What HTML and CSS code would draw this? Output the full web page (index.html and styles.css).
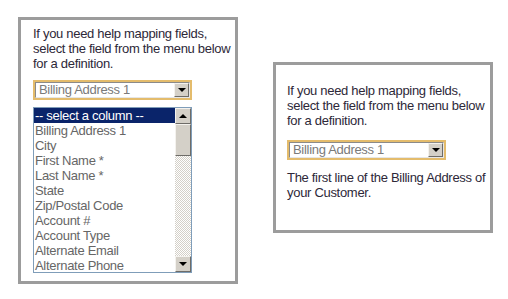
FILE: index.html
```html
<!DOCTYPE html>
<html>
<head>
<meta charset="utf-8">
<link rel="stylesheet" href="styles.css">
</head>
<body>
<div class="page">
  <div class="box box-left">
    <p class="help">If you need help mapping fields, select the field from the menu below for a definition.</p>
    <div class="combo">
      <div class="combo-inner">
        <span class="combo-text">Billing Address 1</span>
        <span class="btn"><span class="tri-down"></span></span>
      </div>
    </div>
    <div class="listbox">
      <ul class="options">
        <li class="selected">-- select a column --</li>
        <li>Billing Address 1</li>
        <li>City</li>
        <li>First Name *</li>
        <li>Last Name *</li>
        <li>State</li>
        <li>Zip/Postal Code</li>
        <li>Account #</li>
        <li>Account Type</li>
        <li>Alternate Email</li>
        <li>Alternate Phone</li>
      </ul>
      <div class="scrollbar">
        <span class="btn sbtn"><span class="tri-up"></span></span>
        <span class="thumb"></span>
        <span class="track"></span>
        <span class="btn sbtn"><span class="tri-down"></span></span>
      </div>
    </div>
  </div>
  <div class="box box-right">
    <p class="help">If you need help mapping fields, select the field from the menu below for a definition.</p>
    <div class="combo combo-spaced">
      <div class="combo-inner">
        <span class="combo-text">Billing Address 1</span>
        <span class="btn"><span class="tri-down"></span></span>
      </div>
    </div>
    <p class="definition">The first line of the Billing Address of your Customer.</p>
  </div>
</div>
</body>
</html>
```
FILE: styles.css
```css
* { box-sizing: border-box; }
html, body { margin: 0; padding: 0; background: #fff; }
body {
  font-family: "Liberation Sans", Arial, sans-serif;
  font-size: 13px;
  letter-spacing: -0.3px;
  color: #2d2838;
}
.page {
  display: flex;
  align-items: flex-start;
  gap: 35px;
  padding: 17px 0 0 18px;
}
.box {
  width: 220px;
  border: 3px solid #9c9c9c;
  background: #fff;
}
.box-left {
  height: 267px;
  padding: 6px 2px 0 12px;
}
.box-right {
  height: 171px;
  margin-top: 45px;
  padding: 18px 2px 0 11px;
}
.help {
  margin: 0;
  line-height: 15px;
}
.combo {
  margin-top: 9px;
  width: 159px;
  height: 20px;
  border: 2px solid #e4bc6c;
}
.combo-spaced { margin-top: 12px; }
.combo-inner {
  display: flex;
  height: 16px;
  border-top: 1px solid #8a8a8a;
  border-left: 1px solid #8a8a8a;
  border-bottom: 1px solid #e6e6e6;
  border-right: 1px solid #e6e6e6;
  background: #fff;
}
.combo-text {
  flex: 1;
  padding-left: 3px;
  line-height: 14px;
  font-size: 13px;
  color: #7a7a7a;
}
.btn {
  display: flex;
  align-items: center;
  justify-content: center;
  width: 15px;
  height: 14px;
  background: #d4d0c8;
  border-top: 1px solid #f4f2ee;
  border-left: 1px solid #f4f2ee;
  border-right: 1px solid #6e6c68;
  border-bottom: 1px solid #6e6c68;
}
.tri-down {
  width: 0; height: 0;
  border-left: 4px solid transparent;
  border-right: 4px solid transparent;
  border-top: 4px solid #000;
}
.tri-up {
  width: 0; height: 0;
  border-left: 4px solid transparent;
  border-right: 4px solid transparent;
  border-bottom: 4px solid #000;
}
.combo + .listbox { margin-top: 7px; }
.listbox {
  display: flex;
  width: 159px;
  height: 166px;
  border: 1px solid #7f9db9;
  background: #fff;
}
.options {
  flex: 1;
  margin: 0;
  padding: 0;
  list-style: none;
}
.options li {
  height: 15px;
  line-height: 15px;
  padding-left: 1px;
  font-size: 13px;
  color: #666;
  white-space: nowrap;
}
.options li.selected {
  background: #0a246a;
  color: #fff;
}
.scrollbar {
  display: flex;
  flex-direction: column;
  width: 16px;
}
.sbtn {
  width: 16px;
  height: 16px;
}
.thumb {
  height: 32px;
  background: #d4d0c8;
  border-top: 1px solid #f4f2ee;
  border-left: 1px solid #f4f2ee;
  border-right: 1px solid #6e6c68;
  border-bottom: 1px solid #6e6c68;
}
.track {
  flex: 1;
  background: repeating-conic-gradient(#d4d0c8 0 25%, #fff 0 50%) 0 0 / 2px 2px;
}
.definition {
  margin: 10px 0 0 0;
  line-height: 15px;
}
```
